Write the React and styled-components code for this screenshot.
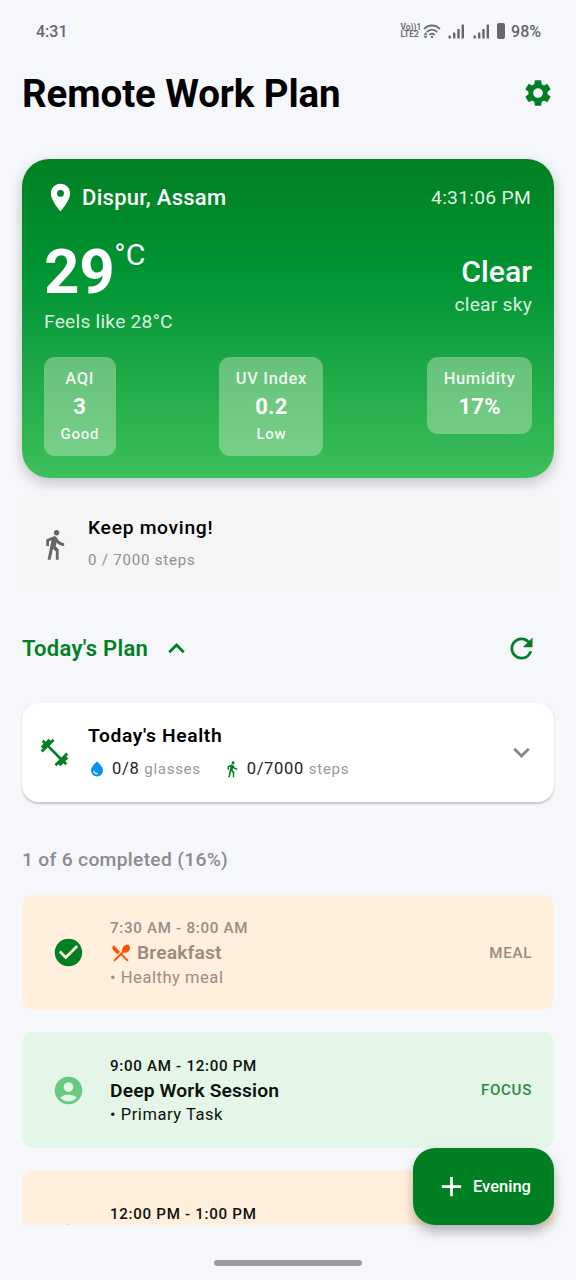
import React from "react";
import styled, { createGlobalStyle } from "styled-components";
import {
  MdAccountCircle,
  MdAdd,
  MdCheckCircle,
  MdDirectionsWalk,
  MdFitnessCenter,
  MdKeyboardArrowDown,
  MdKeyboardArrowUp,
  MdLocationOn,
  MdRefresh,
  MdRestaurantMenu,
  MdSettings,
  MdWaterDrop,
} from "react-icons/md";

const GREEN = "#008022";

const stats = [
  { label: "AQI", value: "3", note: "Good" },
  { label: "UV Index", value: "0.2", note: "Low" },
  { label: "Humidity", value: "17%" },
];

const plan = [
  {
    time: "7:30 AM - 8:00 AM",
    title: "Breakfast",
    task: "Healthy meal",
    tag: "MEAL",
    meal: true,
    done: true,
    height: 115,
  },
  {
    time: "9:00 AM - 12:00 PM",
    title: "Deep Work Session",
    task: "Primary Task",
    tag: "FOCUS",
    height: 116,
  },
  {
    time: "12:00 PM - 1:00 PM",
    meal: true,
    height: 136,
  },
];

function Signal() {
  return (
    <svg width="17" height="15" viewBox="0 0 17 15" fill="#66676b">
      <rect x="0.5" y="11.5" width="2.4" height="3" rx="0.6" />
      <rect x="5" y="8.5" width="2.4" height="6" rx="0.6" />
      <rect x="9.3" y="5" width="2.4" height="9.5" rx="0.6" />
      <rect x="13.6" y="0.6" width="2.4" height="13.9" rx="0.6" />
    </svg>
  );
}

function Wifi() {
  return (
    <svg width="18" height="15" viewBox="0 0 18 15" fill="none">
      <g stroke="#66676b" strokeWidth="1.7" strokeLinecap="round">
        <path d="M1.5 4.6C5.8 0.3 12.2 0.3 16.5 4.6" />
        <path d="M4.3 7.6c2.7-2.5 6.7-2.5 9.4 0" />
        <path d="M6.9 10.4c1.3-1.1 2.9-1.1 4.2 0" />
      </g>
      <circle cx="9" cy="12.9" r="1.2" fill="#66676b" />
      <path d="M2.6 8.2l2 2.6h-4zM2.6 14.4l2-2.6h-4z" fill="#66676b" />
    </svg>
  );
}

function PlanItem({ item }) {
  return (
    <Item $meal={item.meal} $height={item.height}>
      <ItemIcon $done={item.done}>
        {item.done ? <MdCheckCircle /> : <MdAccountCircle />}
      </ItemIcon>
      <ItemBody $done={item.done}>
        <ItemTime>{item.time}</ItemTime>
        <ItemTitle>
          {item.meal && <MdRestaurantMenu />}
          {item.title}
        </ItemTitle>
        <ItemTask>{item.task && `• ${item.task}`}</ItemTask>
      </ItemBody>
      {item.tag && <ItemTag $meal={item.meal}>{item.tag}</ItemTag>}
    </Item>
  );
}

function App() {
  return (
    <>
      <GlobalStyle />
      <Screen>
        <StatusBar>
          <Clock>4:31</Clock>
          <StatusIcons>
            <Volte>
              <span>Vo))1</span>
              <span>LTE2</span>
            </Volte>
            <Wifi />
            <Signal />
            <Signal />
            <Battery />
            <Percent>98%</Percent>
          </StatusIcons>
        </StatusBar>

        <Header>
          <PageTitle>Remote Work Plan</PageTitle>
          <MdSettings />
        </Header>

        <Content>
          <Weather>
            <PlaceRow>
              <MdLocationOn />
              <Place>Dispur, Assam</Place>
              <LocalTime>4:31:06 PM</LocalTime>
            </PlaceRow>
            <Conditions>
              <div>
                <Temperature>
                  <Degrees>29</Degrees>
                  <Unit>°C</Unit>
                </Temperature>
                <Feels>Feels like 28°C</Feels>
              </div>
              <Sky>
                <SkyMain>Clear</SkyMain>
                <SkyNote>clear sky</SkyNote>
              </Sky>
            </Conditions>
            <Stats>
              {stats.map((stat) => (
                <Stat key={stat.label}>
                  <StatLabel>{stat.label}</StatLabel>
                  <StatValue>{stat.value}</StatValue>
                  {stat.note && <StatNote>{stat.note}</StatNote>}
                </Stat>
              ))}
            </Stats>
          </Weather>

          <Steps>
            <MdDirectionsWalk />
            <div>
              <StepsTitle>Keep moving!</StepsTitle>
              <StepsCount>0 / 7000 steps</StepsCount>
            </div>
          </Steps>

          <PlanHeader>
            <PlanTitle>Today's Plan</PlanTitle>
            <MdKeyboardArrowUp />
            <RefreshIcon />
          </PlanHeader>

          <Health>
            <HealthIcon />
            <HealthBody>
              <HealthTitle>Today's Health</HealthTitle>
              <Metrics>
                <Metric $color="#0a92f5">
                  <MdWaterDrop />
                  <b>0/8</b> glasses
                </Metric>
                <Metric $color={GREEN}>
                  <MdDirectionsWalk />
                  <b>0/7000</b> steps
                </Metric>
              </Metrics>
            </HealthBody>
            <MdKeyboardArrowDown />
          </Health>

          <Progress>1 of 6 completed (16%)</Progress>

          <PlanList>
            {plan.map((item) => (
              <PlanItem key={item.time} item={item} />
            ))}
          </PlanList>
        </Content>

        <Fab>
          <MdAdd />
          Evening
        </Fab>
        <NavBar>
          <NavHandle />
        </NavBar>
      </Screen>
    </>
  );
}

export default App;

const GlobalStyle = createGlobalStyle`
  * {
    box-sizing: border-box;
  }
  body {
    margin: 0;
    background: #f5f7fb;
    font-family: Roboto, sans-serif;
  }
  svg {
    flex-shrink: 0;
    display: block;
  }
`;

const Screen = styled.div`
  position: relative;
  display: flex;
  flex-direction: column;
  width: 576px;
  height: 1280px;
  overflow: hidden;
  white-space: nowrap;
  background: #f5f7fb;
`;

const StatusBar = styled.div`
  display: flex;
  justify-content: space-between;
  align-items: center;
  height: 44px;
  padding: 18px 35px 0 36px;
  color: #66676b;
`;

const Clock = styled.span`
  font-size: 16px;
  font-weight: 500;
`;

const StatusIcons = styled.div`
  display: flex;
  align-items: center;

  svg:nth-of-type(1) {
    margin-left: 3px;
  }
  svg:nth-of-type(n + 2) {
    margin-left: 7.5px;
  }
`;

const Volte = styled.div`
  display: flex;
  flex-direction: column;
  width: 19px;
  font-size: 8.4px;
  line-height: 7.5px;
  font-weight: 600;
`;

const Battery = styled.div`
  width: 8.5px;
  height: 16px;
  margin-left: 7px;
  border-radius: 2px;
  background: #66676b;
`;

const Percent = styled.span`
  margin-left: 6px;
  font-size: 16px;
  font-weight: 500;
`;

const Header = styled.div`
  display: flex;
  align-items: center;
  justify-content: space-between;
  height: 98px;
  padding: 0 22px;
  color: ${GREEN};

  svg {
    width: 32px;
    height: 32px;
  }
`;

const PageTitle = styled.h1`
  margin: 0;
  font-size: 38.5px;
  font-weight: 700;
  letter-spacing: -0.1px;
  color: #000;
`;

const Content = styled.div`
  display: flex;
  flex-direction: column;
  height: 1083px;
  padding: 17px 22px 0;
  overflow: hidden;
`;

const Weather = styled.div`
  flex-shrink: 0;
  height: 319px;
  padding: 22px;
  border-radius: 27.5px;
  color: #fff;
  background: linear-gradient(180deg, #008022 0%, #009432 36%, #3dbf5c 100%);
  box-shadow: 0 5px 14px rgba(0, 0, 0, 0.22);
`;

const PlaceRow = styled.div`
  display: flex;
  align-items: center;
  height: 33px;

  svg {
    width: 33px;
    height: 33px;
  }
`;

const Place = styled.span`
  flex: 1;
  margin-left: 5px;
  font-size: 22px;
  font-weight: 500;
  letter-spacing: 0.28px;
`;

const LocalTime = styled.span`
  font-size: 19.25px;
  letter-spacing: 0.28px;
  margin-right: 1px;
  color: rgba(255, 255, 255, 0.9);
`;

const Conditions = styled.div`
  display: flex;
  justify-content: space-between;
  align-items: center;
  height: 121px;
  margin-top: 11px;
`;

const Temperature = styled.div`
  display: flex;
  align-items: flex-start;
  height: 72px;
`;

const Degrees = styled.span`
  font-size: 61.9px;
  line-height: 72px;
  font-weight: 700;
  letter-spacing: -0.35px;
`;

const Unit = styled.span`
  font-size: 30.25px;
  line-height: 38px;
`;

const Feels = styled.div`
  font-size: 19.25px;
  line-height: 27.5px;
  letter-spacing: 0.22px;
  color: rgba(255, 255, 255, 0.85);
`;

const Sky = styled.div`
  text-align: right;
`;

const SkyMain = styled.div`
  font-size: 30.25px;
  line-height: 38.5px;
  font-weight: 500;
`;

const SkyNote = styled.div`
  font-size: 19.25px;
  line-height: 27.5px;
  letter-spacing: 0.22px;
  color: rgba(255, 255, 255, 0.85);
`;

const Stats = styled.div`
  display: flex;
  justify-content: space-between;
  align-items: flex-start;
  margin-top: 10.5px;
`;

const Stat = styled.div`
  padding: 11.5px 16.5px 10.5px;
  border-radius: 11px;
  text-align: center;
  background: rgba(238, 245, 222, 0.36);
`;

const StatLabel = styled.div`
  font-size: 16.5px;
  line-height: 22px;
  font-weight: 500;
  letter-spacing: 0.66px;
  color: rgba(255, 255, 255, 0.92);
`;

const StatValue = styled.div`
  font-size: 22px;
  line-height: 33px;
  font-weight: 700;
  letter-spacing: 0.2px;
`;

const StatNote = styled.div`
  font-size: 15.1px;
  line-height: 22px;
  font-weight: 500;
  letter-spacing: 0.66px;
  color: rgba(255, 255, 255, 0.92);
`;

const Steps = styled.div`
  display: flex;
  align-items: center;
  flex-shrink: 0;
  height: 99px;
  margin-top: 14px;
  padding: 5px 16.5px 0 15.5px;
  border-radius: 11px;
  background: #f5f5f5;

  svg {
    width: 33px;
    height: 33px;
    margin-right: 17.5px;
    color: #666;
  }
`;

const StepsTitle = styled.div`
  font-size: 19.25px;
  line-height: 27.5px;
  font-weight: 500;
  letter-spacing: 0.7px;
  color: #000;
`;

const StepsCount = styled.div`
  margin-top: 5.5px;
  font-size: 15.1px;
  line-height: 27.5px;
  letter-spacing: 0.76px;
  color: #8f8f8f;
`;

const PlanHeader = styled.div`
  display: flex;
  align-items: center;
  flex-shrink: 0;
  height: 112px;
  padding: 2px 16.5px 0 0;
  color: ${GREEN};

  svg {
    width: 33px;
    height: 33px;
  }
  svg:first-of-type {
    margin-left: 12px;
  }
`;

const PlanTitle = styled.h2`
  margin: 0;
  font-size: 22px;
  font-weight: 600;
  letter-spacing: 0.27px;
`;

const RefreshIcon = styled(MdRefresh)`
  margin-left: auto;
`;

const Health = styled.div`
  display: flex;
  align-items: center;
  flex-shrink: 0;
  height: 99px;
  padding: 0 16.5px 0 15.5px;
  border-radius: 16.5px;
  background: #fff;
  box-shadow: 0 1.5px 2px rgba(0, 0, 0, 0.2);
  color: #888;

  > svg:last-child {
    width: 33px;
    height: 33px;
  }
`;

const HealthIcon = styled(MdFitnessCenter)`
  width: 33px;
  height: 33px;
  color: ${GREEN};
`;

const HealthBody = styled.div`
  flex: 1;
  margin-left: 17.5px;
  margin-top: -3px;
`;

const HealthTitle = styled.div`
  font-size: 19.25px;
  line-height: 27.5px;
  font-weight: 600;
  letter-spacing: 0.62px;
  color: #000;
`;

const Metrics = styled.div`
  display: flex;
  gap: 22px;
  margin-top: 9px;
`;

const Metric = styled.div`
  display: flex;
  align-items: center;
  font-size: 15.1px;
  line-height: 22px;
  letter-spacing: 0.66px;
  color: #999;

  b {
    margin: 0 5px 0 6px;
    font-size: 16.5px;
    font-weight: 400;
    color: #222;
  }
  svg {
    width: 18px;
    height: 18px;
    color: ${(props) => props.$color};
  }
`;

const Progress = styled.div`
  flex-shrink: 0;
  height: 93px;
  font-size: 19.25px;
  line-height: 115px;
  font-weight: 500;
  letter-spacing: 0.3px;
  color: #8b8b8d;
`;

const PlanList = styled.div`
  display: flex;
  flex-direction: column;
  gap: 22px;
`;

const Item = styled.div`
  display: flex;
  align-items: center;
  flex-shrink: 0;
  height: ${(props) => props.$height}px;
  padding: 0 22px 0 30px;
  border-radius: 11px;
  background: ${(props) => (props.$meal ? "#ffefdc" : "#e4f6e8")};
`;

const ItemIcon = styled.div`
  color: ${(props) => (props.$done ? GREEN : "#66cb7e")};

  svg {
    width: 33px;
    height: 33px;
  }
`;

const ItemBody = styled.div`
  flex: 1;
  margin-left: 25px;
  padding-top: 1px;
  color: ${(props) => (props.$done ? "#978d84" : "#0c120c")};
`;

const ItemTime = styled.div`
  font-size: 15.1px;
  line-height: 22px;
  font-weight: 500;
  letter-spacing: 0.71px;
`;

const ItemTitle = styled.div`
  display: flex;
  align-items: center;
  height: 27.5px;
  font-size: 19.25px;
  line-height: 27.5px;
  font-weight: 600;
  letter-spacing: 0.14px;

  svg {
    width: 22px;
    height: 22px;
    margin-right: 5px;
    color: #ff4d00;
  }
`;

const ItemTask = styled.div`
  height: 22px;
  font-size: 16.5px;
  line-height: 22px;
  letter-spacing: 0.55px;
`;

const ItemTag = styled.span`
  font-size: 15.1px;
  font-weight: 500;
  letter-spacing: 0.69px;
  color: ${(props) => (props.$meal ? "#978d84" : "#2a8a42")};
`;

const Fab = styled.button`
  position: absolute;
  right: 22px;
  bottom: 55px;
  display: flex;
  align-items: center;
  width: 141px;
  height: 77px;
  padding: 0 22px;
  border: none;
  border-radius: 22px;
  color: #fff;
  background: ${GREEN};
  box-shadow: 0 7px 12px rgba(0, 0, 0, 0.27);
  font-family: inherit;
  font-size: 16.5px;
  font-weight: 500;

  svg {
    width: 33px;
    height: 33px;
    margin-right: 5px;
  }
`;

const NavBar = styled.div`
  display: flex;
  justify-content: center;
  height: 55px;
  padding-top: 35px;
`;

const NavHandle = styled.div`
  width: 148px;
  height: 6px;
  border-radius: 3px;
  background: #9b9ca0;
`;
